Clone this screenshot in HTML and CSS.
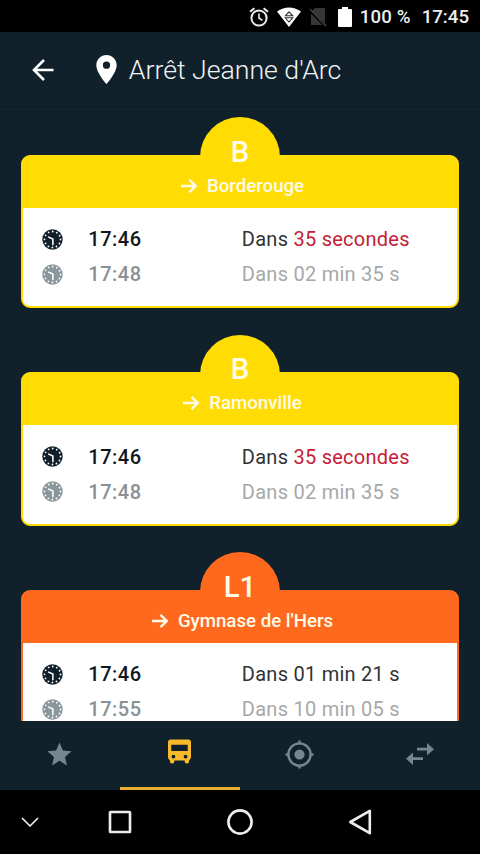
FILE: index.html
```
<!DOCTYPE html>
<html lang="fr">
<head>
<meta charset="utf-8">
<title>Arrêt Jeanne d'Arc</title>
<link rel="stylesheet" href="styles.css">
</head>
<body>
<svg class="defs" width="0" height="0">
  <symbol id="clock" viewBox="0 0 22 22">
    <circle cx="11" cy="11" r="10.7" fill="currentColor"/>
    <circle cx="11" cy="11" r="8.4" fill="none" stroke="#fff" stroke-width="1.9" stroke-linecap="round" stroke-dasharray="0 4.398"/>
    <path d="M6.4 8.300l5 2.200V17" fill="none" stroke="#fff" stroke-width="1.600"/>
  </symbol>
  <symbol id="arrow" viewBox="0 0 16 16">
    <path d="M0 8h14.500M8.500 1.800L14.700 8l-6.200 6.200" fill="none" stroke="currentColor" stroke-width="2.400"/>
  </symbol>
</svg>
<div class="screen">
  <header class="status">
    <svg class="s-alarm" viewBox="0 0 20 20"><g fill="none" stroke="#eee" stroke-width="2"><circle cx="10" cy="11" r="7.6"/><path d="M10 6.500V11l3.400 2.300" stroke-width="1.600"/><path d="M1 4.800L5.400 1.200M19 4.800L14.600 1.200"/></g></svg>
    <svg class="s-wifi" viewBox="0 0 24 20"><path d="M0 4.500Q12-3.500 24 4.500L12 20z" fill="#fff"/><path d="M8.300 8.800L12 4.800l3.700 4zM8.300 10.800h7.400L12 15z" fill="#fff" stroke="#333" stroke-width="1.100"/></svg>
    <svg class="s-sim" viewBox="0 0 18 20"><path d="M6 1h10v15.200L3 4zM2 6.500L13.500 18H2z" fill="#363636"/><path d="M1 2l16 17" stroke="#444" stroke-width="1.500"/></svg>
    <svg class="s-battery" viewBox="0 0 14 20"><path d="M4 0h6v2h3q1 0 1 1v16q0 1-1 1H1q-1 0-1-1V3q0-1 1-1h3z" fill="#fff"/></svg>
    <span class="level">100 %</span><span class="time">17:45</span>
  </header>
  <div class="appbar">
    <svg class="back" viewBox="0 0 22 22"><path d="M21.500 11H2M12 1L2 11l10 10" fill="none" stroke="#fff" stroke-width="2.600"/></svg>
    <svg class="pin" viewBox="5 2 14 20"><path d="M12 2C8.130 2 5 5.130 5 9c0 5.250 7 13 7 13s7-7.750 7-13c0-3.870-3.130-7-7-7zm0 9.500a2.500 2.500 0 1 1 0-5 2.500 2.500 0 0 1 0 5z" fill="#fff"/></svg>
    <h1>Arrêt Jeanne d'Arc</h1>
  </div>
  <main>
    <section class="card metro">
      <div class="head"><b class="line">B</b><div class="dest"><svg><use href="#arrow"/></svg><span>Borderouge</span></div></div>
      <div class="row"><svg><use href="#clock"/></svg><b>17:46</b><span>Dans <em>35 secondes</em></span></div>
      <div class="row later"><svg><use href="#clock"/></svg><b>17:48</b><span>Dans 02 min 35 s</span></div>
    </section>
    <section class="card metro">
      <div class="head"><b class="line">B</b><div class="dest"><svg><use href="#arrow"/></svg><span>Ramonville</span></div></div>
      <div class="row"><svg><use href="#clock"/></svg><b>17:46</b><span>Dans <em>35 secondes</em></span></div>
      <div class="row later"><svg><use href="#clock"/></svg><b>17:48</b><span>Dans 02 min 35 s</span></div>
    </section>
    <section class="card bus">
      <div class="head"><b class="line">L1</b><div class="dest"><svg><use href="#arrow"/></svg><span>Gymnase de l'Hers</span></div></div>
      <div class="row"><svg><use href="#clock"/></svg><b>17:46</b><span>Dans 01 min 21 s</span></div>
      <div class="row later"><svg><use href="#clock"/></svg><b>17:55</b><span>Dans 10 min 05 s</span></div>
    </section>
  </main>
  <nav class="tabs">
    <div class="tab"><svg viewBox="0 0 24 24"><path d="M12 17.270L18.180 21l-1.640-7.030L22 9.240l-7.190-.610L12 2 9.190 8.630 2 9.240l5.460 4.730L5.820 21z" fill="currentColor"/></svg></div>
    <div class="tab active"><svg class="busicon" viewBox="0 0 24 25"><path fill-rule="evenodd" d="M3 0h18q3 0 3 3v15.500q0 2-2 3V23q0 2-2 2h-.6q-2 0-2-2v-1H6.600v1q0 2-2 2H4q-2 0-2-2v-1.500q-2-1-2-3V3Q0 0 3 0zM3.400 5.500V12h17.200V5.500zM5.700 15.800a2 2 0 1 0 0 4 2 2 0 0 0 0-4zM18.300 15.800a2 2 0 1 0 0 4 2 2 0 0 0 0-4z" fill="currentColor"/></svg></div>
    <div class="tab"><svg viewBox="0 0 30 30"><g fill="none" stroke="currentColor" stroke-width="2.500"><circle cx="15" cy="15" r="11.500"/><path d="M15 .5v4M15 25.500v4M.5 15h4M25.500 15h4"/></g><circle cx="15" cy="15" r="5.300" fill="currentColor"/></svg></div>
    <div class="tab"><svg class="swap" viewBox="0 0 28 22"><path d="M11 4.800h10V0l7 6.200-7 6.200V7.600H11zM17 14.200H7V9.500l-7 6.300L7 22v-5h10z" fill="currentColor"/></svg></div>
  </nav>
  <footer class="sysnav">
    <svg class="chev" viewBox="0 0 18 10"><path d="M1 1l8 8 8-8"/></svg>
    <svg class="sys" viewBox="0 0 26 26"><rect x="3" y="3" width="20" height="20" rx=".6"/></svg>
    <svg class="sys" viewBox="0 0 26 26"><circle cx="13" cy="13" r="11.600"/></svg>
    <svg class="sys" viewBox="0 0 26 26"><path d="M3.300 13L22.800 1.800v22.400z"/></svg>
  </footer>
</div>
</body>
</html>
```
FILE: styles.css
```
* { box-sizing: border-box; }
body { margin: 0; background: #000; font-family: Roboto, "Liberation Sans", sans-serif; }
svg { display: block; flex: none; }
.defs { position: absolute; }
.screen { width: 480px; height: 854px; display: flex; flex-direction: column; overflow: hidden; background: #10212b; }

.status { height: 32px; flex: none; background: #000; display: flex; align-items: center; justify-content: flex-end; padding: 1px 11px 0 0; color: #eee; font-size: 18.67px; font-weight: 500; }
.s-alarm { width: 20px; height: 20px; margin-right: 8px; }
.s-wifi { width: 24px; height: 20px; margin-right: 8px; }
.s-sim { width: 18px; height: 20px; margin-right: 11px; }
.s-battery { width: 14px; height: 20px; margin-right: 8px; }
.level { margin-right: 11px; letter-spacing: .15px; white-space: nowrap; }

.appbar { height: 75px; flex: none; display: flex; align-items: center; padding-left: 31.5px; border-bottom: 1px solid #0d1b24; }
.back { width: 22px; height: 22px; margin-top: 1px; }
.pin { width: 21px; height: 29px; margin-left: 42px; margin-top: 1px; }
h1 { margin: 1px 0 0 12.3px; font-size: 26.67px; font-weight: 300; color: #f2f4f5; white-space: nowrap; }

main { flex: 1; min-height: 0; overflow: hidden; padding: 47.500px 21.300px 0; display: flex; flex-direction: column; gap: 64px; }
.card { position: relative; flex: none; height: 153.500px; border: 2.700px solid var(--c); border-radius: 9px; background: #fff; color: #10171d; }
.card::before { content: ""; position: absolute; width: 80px; height: 80px; border-radius: 50%; top: -39.500px; left: calc(50% - 40px); background: var(--c); }
.metro { --c: #ffdc04; }
.bus { --c: #ff691d; }
.head { height: 52px; margin: -1px 0 14.500px; border-radius: 7px 7px 0 0; background: var(--c); position: relative; display: flex; flex-direction: column; align-items: center; color: #fffbe9; }
.card { background: linear-gradient(var(--c) 20px, #fff 20px); }
.line { font-size: 29.300px; font-weight: 500; line-height: 34px; margin-top: -21px; }
.dest { display: flex; align-items: center; gap: 10px; height: 34px; padding-left: 5px; font-size: 18.670px; font-weight: 500; white-space: nowrap; }
.dest svg { width: 16px; height: 16px; }
.row { position: relative; height: 34.700px; display: flex; align-items: center; padding-left: 18.500px; font-size: 20px; white-space: nowrap; }
.row svg { width: 21px; height: 21px; margin-right: 25.500px; color: #10202a; }
.row b { width: 153.500px; font-weight: 500; letter-spacing: .5px; }
.row span { color: #303336; letter-spacing: .26px; }
.row em { font-style: normal; color: #c52035; }
.row.later b { color: #899195; }
.row.later svg { color: #89969b; }
.row.later span { color: #a5a8a9; }

.tabs { height: 69.500px; flex: none; display: grid; grid-template-columns: repeat(4, 1fr); color: #75868f; }
.tab { display: flex; align-items: center; justify-content: center; padding: 0 1px 2px 0; }
.tab svg { width: 29px; height: 29px; }
.tab .busicon { width: 23px; height: 25px; }
.tab .swap { width: 28px; height: 22px; }
.tab.active { color: #f8b92d; border-bottom: 3px solid #e6ad31; padding-bottom: 4px; }
.sysnav { height: 64px; flex: none; background: #000; display: flex; align-items: center; padding-left: 21px; }
.sysnav svg { fill: none; stroke: #eee; stroke-width: 2.600; stroke-linejoin: round; }
.sysnav .chev { width: 18px; height: 10px; margin-right: 68px; stroke-width: 1.700; }
.sys { width: 26px; height: 26px; margin-right: 94px; }
```
